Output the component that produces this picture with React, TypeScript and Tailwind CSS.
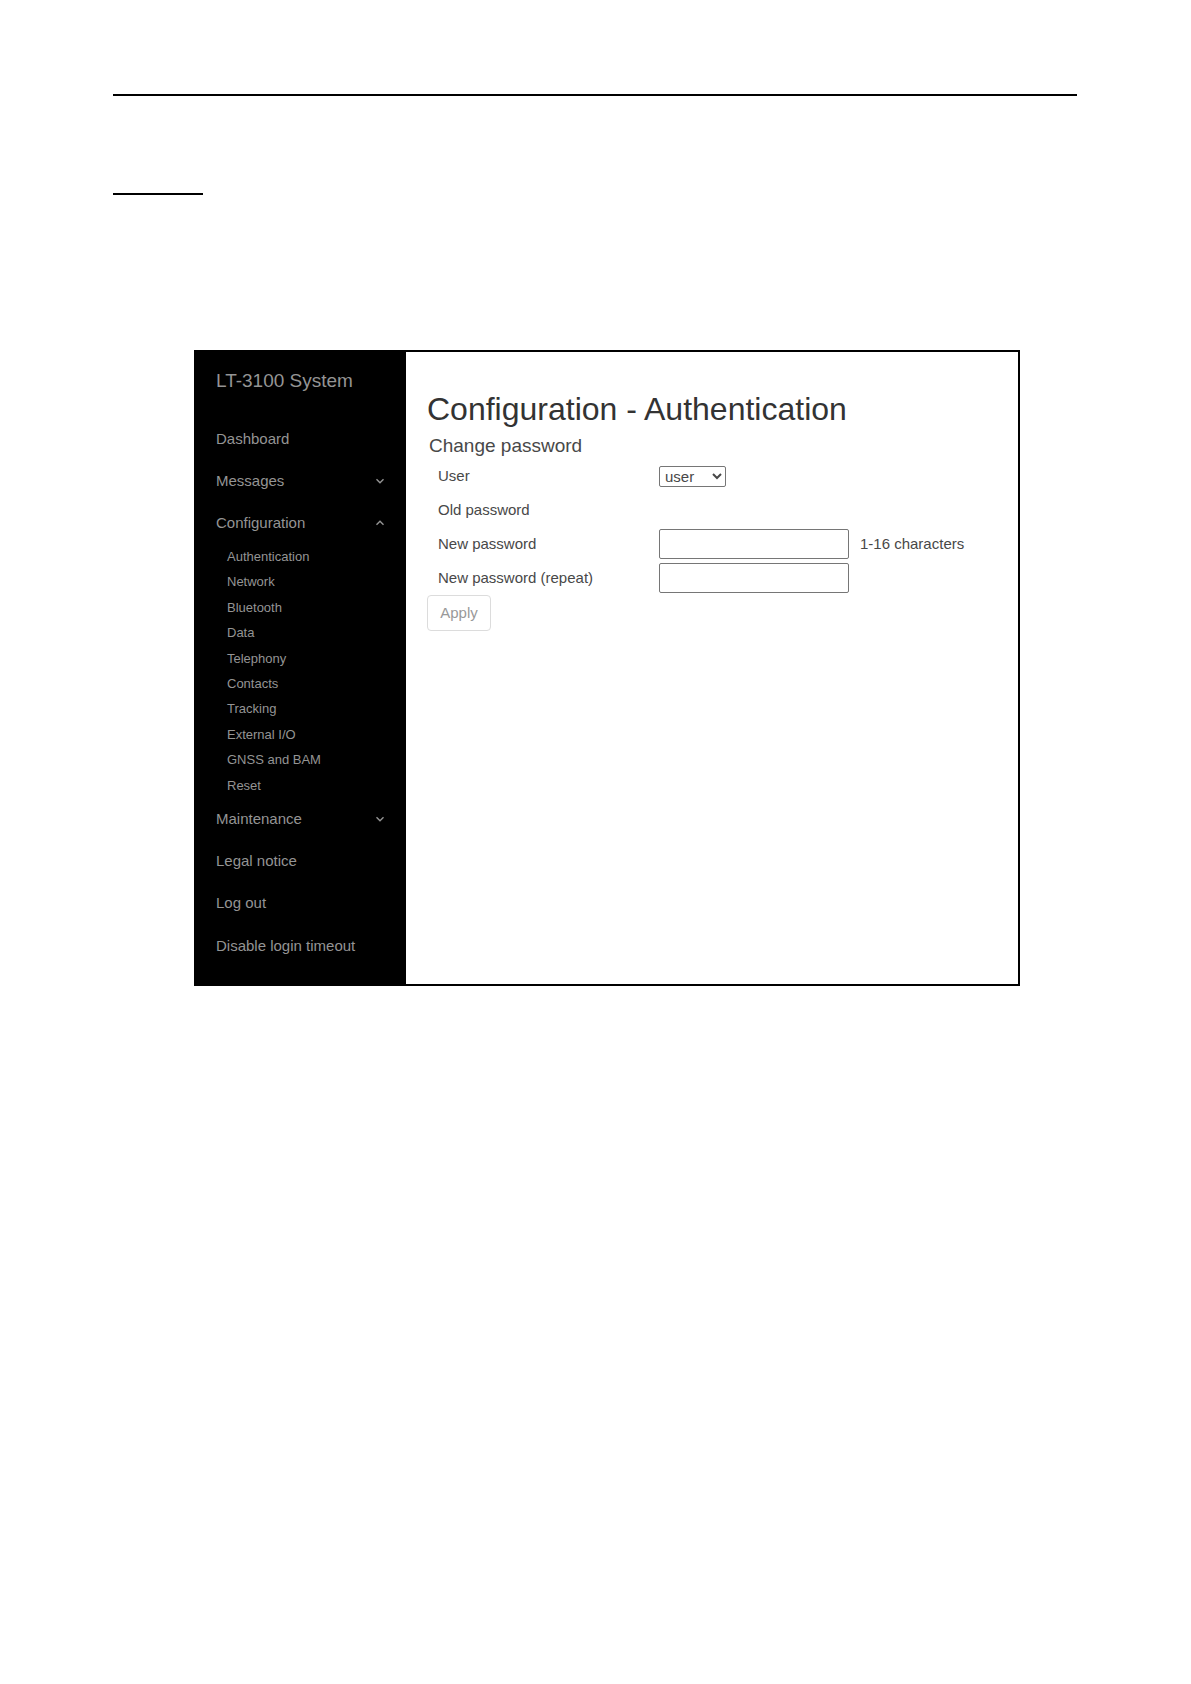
import { useState, type ReactNode } from "react";

const SUBMENU = [
  "Authentication",
  "Network",
  "Bluetooth",
  "Data",
  "Telephony",
  "Contacts",
  "Tracking",
  "External I/O",
  "GNSS and BAM",
  "Reset",
];

function Chevron({ up = false }: { up?: boolean }) {
  return (
    <svg
      width="10"
      height="8"
      viewBox="0 0 10 8"
      fill="none"
      stroke="currentColor"
      strokeWidth="1.4"
      aria-hidden="true"
    >
      <path d={up ? "M1.5 5.8 L5 2.3 L8.5 5.8" : "M1.5 2.2 L5 5.7 L8.5 2.2"} />
    </svg>
  );
}

function NavLink({ children }: { children: ReactNode }) {
  return (
    <a href="#" className="flex flex-1 items-center px-5">
      {children}
    </a>
  );
}

function NavToggle({ children, open = false }: { children: ReactNode; open?: boolean }) {
  return (
    <button
      type="button"
      aria-expanded={open}
      className="flex flex-1 items-center justify-between pl-5 pr-[21px] text-left"
    >
      {children}
      <Chevron up={open} />
    </button>
  );
}

function Sidebar() {
  return (
    <nav className="flex w-[210px] shrink-0 flex-col bg-black pb-[17px] text-[15px] text-[#949494]">
      <a href="#" className="mb-6 mt-4 pl-5 text-[19px] leading-[26px]">
        LT-3100 System
      </a>
      <div className="flex min-h-[126px] flex-col">
        <NavLink>Dashboard</NavLink>
        <NavToggle>Messages</NavToggle>
        <NavToggle open>Configuration</NavToggle>
      </div>
      <div className="flex min-h-[254px] flex-col text-[13px]">
        {SUBMENU.map((item) => (
          <a key={item} href="#" className="flex flex-1 items-center pl-[31px]">
            {item}
          </a>
        ))}
      </div>
      <div className="flex min-h-[169px] flex-col">
        <NavToggle>Maintenance</NavToggle>
        <NavLink>Legal notice</NavLink>
        <NavLink>Log out</NavLink>
        <NavLink>Disable login timeout</NavLink>
      </div>
    </nav>
  );
}

function Row({ id, label, children }: { id?: string; label: string; children?: ReactNode }) {
  return (
    <div className="flex min-h-[34px] items-center pl-[11px]">
      {id ? (
        <label htmlFor={id} className="w-[221px] shrink-0">
          {label}
        </label>
      ) : (
        <span className="w-[221px] shrink-0">{label}</span>
      )}
      {children}
    </div>
  );
}

const FIELD = "h-[30px] w-[190px] rounded-[2px] border border-[#767676] bg-white px-1";

function PasswordForm() {
  const [user, setUser] = useState("user");
  const [next, setNext] = useState("");
  const [repeat, setRepeat] = useState("");
  return (
    <form className="text-[15px] text-[#484848]">
      <h2 className="mt-[6px] pl-[2px] text-[19px] leading-[26px]">Change password</h2>
      <Row id="user" label="User">
        <select
          id="user"
          value={user}
          onChange={(e) => setUser(e.target.value)}
          className="h-[21px] w-[67px] rounded-[2px] border border-[#767676] bg-white pl-px leading-[18px]"
        >
          <option value="user">user</option>
          <option value="admin">admin</option>
        </select>
      </Row>
      <Row label="Old password" />
      <Row id="new-password" label="New password">
        <input
          id="new-password"
          type="password"
          value={next}
          onChange={(e) => setNext(e.target.value)}
          className={FIELD}
        />
        <span className="ml-[11px]">1-16 characters</span>
      </Row>
      <Row id="repeat-password" label="New password (repeat)">
        <input
          id="repeat-password"
          type="password"
          value={repeat}
          onChange={(e) => setRepeat(e.target.value)}
          className={FIELD}
        />
      </Row>
      <button
        type="button"
        disabled
        className="h-9 w-16 rounded border border-[#dcdcdc] bg-white text-[#999999]"
      >
        Apply
      </button>
    </form>
  );
}

export default function App() {
  return (
    <div className="min-h-screen bg-white pt-[94px] font-['Liberation_Sans',Arial,sans-serif]">
      <hr className="ml-[113px] mr-[114px] border-t-2 border-black" />
      <hr className="ml-[113px] mt-[97px] w-[90px] border-t-2 border-black" />
      <div className="ml-[194px] mr-[171px] mt-[155px] flex border-2 border-black">
        <Sidebar />
        <main className="min-w-0 flex-1 pl-[21px] pt-[39px]">
          <h1 className="text-[32px] leading-[36px] text-[#333333]">
            Configuration - Authentication
          </h1>
          <PasswordForm />
        </main>
      </div>
    </div>
  );
}
